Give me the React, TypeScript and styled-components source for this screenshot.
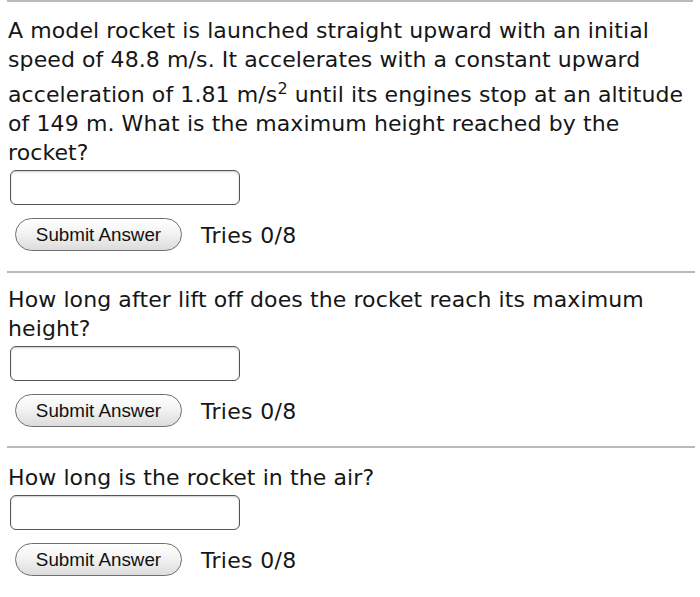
import React from "react";
import styled, { createGlobalStyle } from "styled-components";

const Global = createGlobalStyle`
  html, body { margin: 0; padding: 0; background: #ffffff; }
  body { font-family: "DejaVu Sans", Verdana, sans-serif; color: #161616; }
`;

const Page = styled.div`
  display: flex;
  flex-direction: column;
  padding: 0 0 0 8px;
  width: 700px;
  box-sizing: border-box;
`;

const Section = styled.section`
  display: flex;
  flex-direction: column;
  align-items: flex-start;
`;

const Rule = styled.div<{ $width: number }>`
  height: 2px;
  width: ${(p) => p.$width}px;
  margin-left: -1px;
  background: #b9b9b9;
`;

const Question = styled.p<{ $top: number }>`
  margin: ${(p) => p.$top}px 0 0 0;
  font-size: 22px;
  letter-spacing: 0.1px;
  line-height: 29px;
  width: 686px;
  sup {
    font-size: 16px;
    letter-spacing: 0;
  }
`;

const AnswerInput = styled.input`
  margin: 3px 0 0 2px;
  width: 230px;
  height: 35px;
  box-sizing: border-box;
  border: 1.5px solid #555555;
  border-radius: 6px;
  background: #ffffff;
  box-shadow: inset 0 1px 2px rgba(0, 0, 0, 0.2);
  padding: 0 6px;
  font-size: 18px;
  outline: none;
`;

const SubmitRow = styled.div`
  display: flex;
  align-items: center;
  margin: 13px 0 0 7px;
  gap: 19px;
`;

const SubmitButton = styled.button`
  width: 167px;
  height: 33px;
  box-sizing: border-box;
  border: 1px solid #6f6f6f;
  border-radius: 17px;
  background: linear-gradient(#ffffff 0%, #f3f3f3 45%, #dcdcdc 100%);
  font-family: "Liberation Sans", Arial, sans-serif;
  font-size: 18.8px;
  color: #111111;
  padding: 0;
  cursor: pointer;
`;

const Tries = styled.span`
  font-size: 22px;
  letter-spacing: 0.3px;
  line-height: 29px;
  padding-top: 2px;
`;

const Spacer = styled.div<{ $h: number }>`
  height: ${(p) => p.$h}px;
`;

type Q = { text: React.ReactNode; rule: number; top: number; after: number };

const questions: Q[] = [
  {
    rule: 686,
    top: 14,
    after: 20,
    text: (
      <>
        A model rocket is launched straight upward with an initial speed of 48.8 m/s. It accelerates with a
        constant upward acceleration of 1.81 m/s<sup>2</sup> until its engines stop at an altitude of 149 m.
        What is the maximum height reached by the rocket?
      </>
    ),
  },
  {
    rule: 688,
    top: 12,
    after: 19,
    text: <>How long after lift off does the rocket reach its maximum height?</>,
  },
  {
    rule: 688,
    top: 15,
    after: 0,
    text: <>How long is the rocket in the air?</>,
  },
];

export default function App() {
  return (
    <>
      <Global />
      <Page>
        {questions.map((q, i) => (
          <Section key={i}>
            <Rule $width={q.rule} />
            <Question $top={q.top}>{q.text}</Question>
            <AnswerInput type="text" />
            <SubmitRow>
              <SubmitButton type="button">Submit Answer</SubmitButton>
              <Tries>Tries 0/8</Tries>
            </SubmitRow>
            <Spacer $h={q.after} />
          </Section>
        ))}
      </Page>
    </>
  );
}
